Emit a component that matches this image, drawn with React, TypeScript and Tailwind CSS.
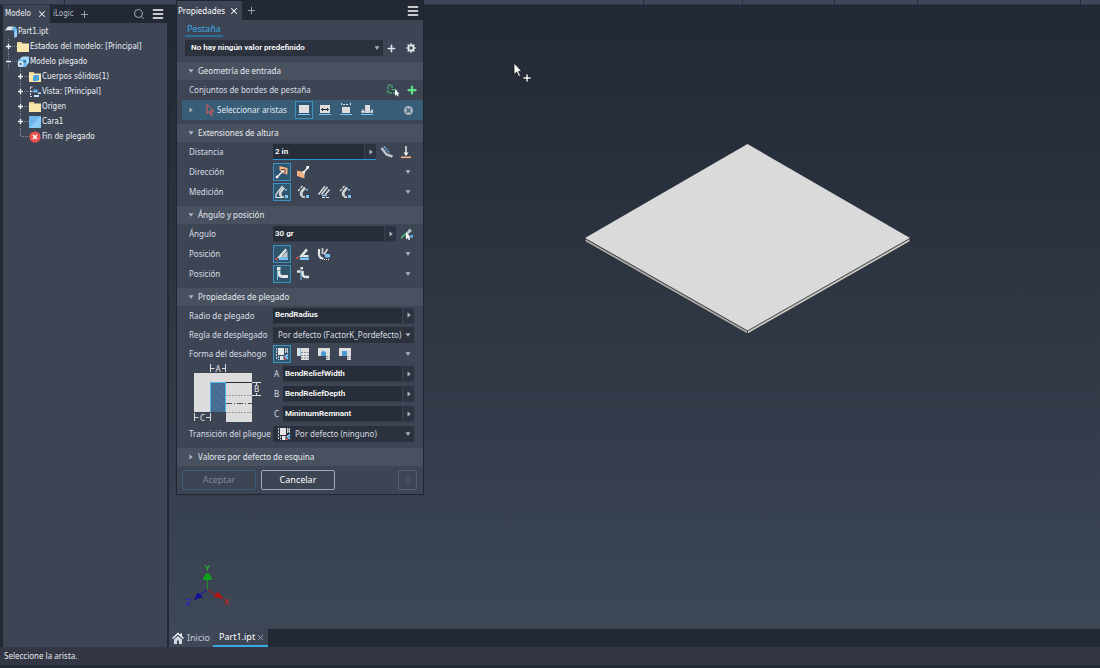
import type { ReactNode } from "react";
import clsx from "clsx";
import { Menu, Plus, Search, X } from "lucide-react";

type IconProps = { className?: string };

/* ---------- small glyphs ---------- */

function Caret({ dir = "down", className }: { dir?: "down" | "right"; className?: string }) {
  return (
    <svg viewBox="0 0 6 6" className={clsx("size-[6px] shrink-0", className)} fill="#aeb5c0" aria-hidden="true">
      {dir === "down" ? <path d="M0.5 1.2h5L3 4.8z" /> : <path d="M1.5 0.5v5L4.8 3z" />}
    </svg>
  );
}

function Gear() {
  return (
    <svg viewBox="0 0 10 10" className="size-[10px]" fill="none" stroke="#e6e8ec" aria-hidden="true">
      <circle cx="5" cy="5" r="2.6" strokeWidth="1.8" />
      <path d="M5 0.3v1.5M5 8.2v1.5M0.3 5h1.5M8.2 5h1.5M1.7 1.7l1 1M7.3 7.3l1 1M8.3 1.7l-1 1M2.7 7.3l-1 1" strokeWidth="1.7" />
    </svg>
  );
}

function Folder({ children }: { children?: ReactNode }) {
  return (
    <svg viewBox="0 0 12 12" className="size-3 shrink-0" aria-hidden="true">
      <path d="M0 1h4.5l1 1.4H12V11H0z" fill="#fbe7ae" />
      <path d="M0 1h4.5l1 1.4H0z" fill="#e8cd86" />
      {children}
    </svg>
  );
}

function PartIcon() {
  return (
    <svg viewBox="0 0 12 12" className="size-3 shrink-0" aria-hidden="true">
      <path d="M0 4.2 3 0.5h6L6.5 4.2z" fill="#e3e6ea" />
      <path d="M6.5 4.2 9 0.5c2 0.4 3 1.6 3 3.4v6.6l-2.6 1.2V6c0-1-1-1.6-2.9-1.8z" fill="#6bb8ee" />
      <path d="M9.4 6v5.7l2.6-1.2V4.6z" fill="#9ad3f8" />
    </svg>
  );
}

function FoldedModelIcon() {
  return (
    <svg viewBox="0 0 12 12" className="size-3 shrink-0" aria-hidden="true">
      <path d="M2.5 3 5.5 0.5H12v6.200L9 10z" fill="#a7d8f8" />
      <path d="M1 3.500h8.500V11H1z" fill="#6fbaee" />
      <circle cx="3.6" cy="8" r="2.9" fill="#dfe5ea" />
      <circle cx="3.6" cy="8" r="1.2" fill="#3f7fb0" />
      <circle cx="7.6" cy="5.4" r="1.2" fill="#23658f" />
    </svg>
  );
}

function ViewIcon() {
  return (
    <svg viewBox="0 0 12 12" className="size-3 shrink-0" aria-hidden="true">
      <path d="M1.5 1v9.5H4M1.5 5.5H5M1.5 1H4" stroke="#d7dce3" fill="none" strokeDasharray="2 1" />
      <path d="M4.5 3.5h4v3h-4z" fill="#63b4ec" />
      <path d="M9 6.5h3v1.5H9zM5 9h5v2H5z" fill="#c9e6fa" />
    </svg>
  );
}

function FaceIcon() {
  return (
    <svg viewBox="0 0 12 12" className="size-3 shrink-0" aria-hidden="true">
      <path d="M0 0h12v12H0z" fill="#6cb6ec" />
      <path d="M0 12 12 0v12z" fill="#8bcbf5" />
    </svg>
  );
}

function EndFoldIcon() {
  return (
    <svg viewBox="0 0 12 12" className="size-3 shrink-0" aria-hidden="true">
      <circle cx="6" cy="6" r="5.6" fill="#f0514f" />
      <path d="M4 4l4 4M8 4 4 8" stroke="#fff" strokeWidth="1.6" />
    </svg>
  );
}

/* ---------- tool icons, all on a 14px grid ---------- */

function Tool({ children, className }: IconProps & { children: ReactNode }) {
  return (
    <svg viewBox="0 0 14 14" className={clsx("size-[14px] shrink-0", className)} fill="none" aria-hidden="true">
      {children}
    </svg>
  );
}

const edgeIcons = [
  <Tool key="full">
    <path d="M2 2h10v8H2z" fill="#dedede" />
    <path d="M1 11.5h12" stroke="#7cc4f5" />
  </Tool>,
  <Tool key="width">
    <path d="M2 2h10v8H2z" fill="#dedede" />
    <path d="M3 6.500h8M4.500 5v3M9.500 5v3" stroke="#2d333d" />
    <path d="M1 11.5h12" stroke="#7cc4f5" />
  </Tool>,
  <Tool key="offset">
    <path d="M3 4h8v6H3z" fill="#dedede" />
    <path d="M2.500 0v3M11.500 0v3M4 1.500h6" stroke="#dedede" strokeDasharray="2 1" />
    <path d="M1 11.5h12" stroke="#7cc4f5" />
  </Tool>,
  <Tool key="fromTo">
    <path d="M5 2h5v8H5z" fill="#dedede" />
    <path d="M1 8h12v1.500H1zM2 6.500h2V10H2zM11 6.500h2V10h-2z" fill="#c9ccd1" />
    <path d="M1 11.5h12" stroke="#7cc4f5" />
  </Tool>,
];

const directionIcons = [
  <Tool key="a">
    <path d="M4.500 1 12.500 3v6.500L8.500 8.500 4.500 5z" fill="#f2b387" />
    <path d="M2 12 8.500 5.500" stroke="#fff" strokeWidth="1.3" />
    <path d="M0.8 10.800h2.600v2.400H0.8z" fill="#fff" />
    <path d="M6 4.500h4v4" stroke="#4a3a3a" strokeWidth="0.900" />
  </Tool>,
  <Tool key="b">
    <path d="M1 5.500l7.500 2v6L1 11z" fill="#f2b387" />
    <path d="M7 8 12 2.500" stroke="#fff" strokeWidth="1.3" />
    <path d="M10.400 1H13v2.600h-2.600zM6 6l3 0.300-.5 3z" fill="#fff" />
  </Tool>,
];

function Bend({ dashed, base }: { dashed?: boolean; base?: boolean }) {
  return (
    <>
      {base && <path d="M7.500 0.800 1 9.500V12.500h6" stroke="#e6e6e6" strokeWidth="1.200" />}
      {dashed && <path d="M6.500 0.800 1.800 6.500" stroke="#e6e6e6" strokeWidth="1.200" strokeDasharray="3 1" />}
      <path d="M9 2.500 5.500 7c-.8 1.500-.3 3 1 4" stroke="#d4d6d9" strokeWidth="2.600" />
      <path d="M6 12h3" stroke="#e6e6e6" strokeWidth="1.600" />
      <path d="M10 10h3v3h-3zM10 4h2v1.500h-2z" fill="#7cc4f5" />
    </>
  );
}

const measureIcons = [
  <Tool key="a"><Bend base /></Tool>,
  <Tool key="b"><Bend dashed /></Tool>,
  <Tool key="c">
    <path d="M8 1.200 1.500 9.500M10.500 2 4.500 9.500M12.500 4.500 8 10" stroke="#d4d6d9" strokeWidth="1.6" />
    <path d="M5 10.500h5" stroke="#7cc4f5" strokeWidth="1.4" />
    <path d="M5 12.500h8" stroke="#e6e6e6" strokeDasharray="3 1" />
  </Tool>,
  <Tool key="d"><Bend dashed /></Tool>,
];

const bendPositionIcons = [
  <Tool key="a">
    <path d="M2 11 10.500 1.500 12 3 5.500 11z" fill="#e6e6e6" />
    <path d="M6 10.500 12.500 4v6.500z" fill="#c9ccd1" />
    <path d="M4 10.500h9V13H4z" fill="#7cc4f5" />
    <path d="M0.500 11h2v2h-2z" fill="#e8504f" />
  </Tool>,
  <Tool key="b">
    <path d="M3 10 10 1.500l1.800 1.800L6.500 10z" fill="#e6e6e6" />
    <path d="M8 8h4.500v2H6.500z" fill="#e6e6e6" />
    <path d="M4 10.500h9V13H4z" fill="#7cc4f5" />
    <path d="M0.500 10h2v2h-2z" fill="#e8504f" />
  </Tool>,
  <Tool key="c">
    <path d="M2 2v4.500c0 3.500 2 5 4.500 5" stroke="#e6e6e6" strokeWidth="2.200" />
    <path d="M5.500 1v6M10.500 2 7 7.500" stroke="#c9ccd1" strokeWidth="1.800" />
    <path d="M8 7h5v3.500H8z" fill="#7cc4f5" />
    <path d="M7 12.500h6" stroke="#fff" strokeDasharray="1 1" />
  </Tool>,
];

const reliefPositionIcons = [
  <Tool key="a">
    <path d="M2 0h3.500v3H2z" fill="#e6e6e6" />
    <path d="M4 3.500v2.500c0 2.200 1.200 3.500 3.200 3.500H13" stroke="#e6e6e6" strokeWidth="2.800" />
    <path d="M2.500 3v10" stroke="#7cc4f5" />
  </Tool>,
  <Tool key="b">
    <path d="M4.500 0H7v2.500H4.500z" fill="#e6e6e6" />
    <path d="M1 4.500h3.500M6.500 4v2.500c0 2 1.200 3.500 3 3.500H13" stroke="#e6e6e6" strokeWidth="2.600" />
    <path d="M5 2.500V13" stroke="#7cc4f5" />
  </Tool>,
];

function TransitionIcon() {
  return (
    <Tool>
      <path d="M1.500 1v11M3.500 9v4" stroke="#c7ccd3" strokeDasharray="2 1" />
      <path d="M3 1h6v7H3z" fill="#e6e6e6" />
      <path d="M5 9h3.500v4H5z" fill="#e6e6e6" />
      <path d="M10 1h3v5h-3z" fill="#c7ccd3" />
      <path d="M11.500 1v5" stroke="#4a5261" strokeDasharray="1 1" />
      <path d="M9.500 8.500h1.500v1.500H9.500zM9 11.500h2V13H9z" fill="#e8504f" />
      <path d="M13 7.500 10 10.500M11.500 12l1.500-1.500" stroke="#7cc4f5" strokeWidth="1.800" />
    </Tool>
  );
}

const reliefIcons = [
  <TransitionIcon key="a" />,
  <Tool key="b">
    <path d="M1 1h3v8H1zM5 1h8v12H5z" fill="#dedede" />
    <path d="M5 5.500h8M5 8.500h8M5 11h8" stroke="#8a929e" strokeDasharray="2 1" />
    <path d="M4.500 1v8" stroke="#7cc4f5" />
  </Tool>,
  <Tool key="c">
    <path d="M1 1h12v12H9V7a3 3 0 0 0-5 0v2H1z" fill="#dedede" />
    <path d="M4 9V6.500a2.500 2.500 0 0 1 5 0V9z" fill="#4b9ad2" />
    <path d="M9 9.500h4M9 11.500h4" stroke="#8a929e" strokeDasharray="2 1" />
  </Tool>,
  <Tool key="d">
    <path d="M1 1h12v12H9V4H4v5H1z" fill="#dedede" />
    <path d="M4 4h5v5H4z" fill="#4b9ad2" />
    <path d="M9 9.500h4M9 11.500h4" stroke="#8a929e" strokeDasharray="2 1" />
  </Tool>,
];

/* ---------- form pieces ---------- */

function IconChoice({ label, icons, rowCaret = true }: { label: string; icons: ReactNode[]; rowCaret?: boolean }) {
  return (
    <div role="group" aria-label={label} className="flex flex-1 items-center gap-[3px]">
      {icons.map((icon, i) => (
        <button
          key={i}
          type="button"
          aria-label={`${label} ${i + 1}`}
          aria-pressed={i === 0}
          className={clsx(
            "grid size-[18px] place-items-center border",
            i === 0 ? "border-[#3f8fc0] bg-[#30566f]" : "border-transparent"
          )}
        >
          {icon}
        </button>
      ))}
      {rowCaret && <Caret className="mr-[3px] ml-auto" />}
    </div>
  );
}

function Row({ label, id, short, children }: { label: string; id?: string; short?: boolean; children: ReactNode }) {
  return (
    <div className={clsx("flex items-center pr-[9px] pl-3", short ? "h-[19px]" : "h-5")}>
      {id ? (
        <label htmlFor={id} className="w-[84px] shrink-0 whitespace-nowrap">{label}</label>
      ) : (
        <span className="w-[84px] shrink-0 whitespace-nowrap">{label}</span>
      )}
      {children}
    </div>
  );
}

function Field({ id, value, label, active }: { id: string; value: string; label?: string; active?: boolean }) {
  return (
    <div
      className={clsx(
        "flex h-4 min-w-0 flex-1 border-b bg-[#272d39]",
        active ? "border-[#1f9ad6]" : "border-[#333a47]"
      )}
    >
      <input
        id={id}
        aria-label={label}
        defaultValue={value}
        className="w-full min-w-0 flex-1 bg-transparent px-[2px] font-['Roboto',sans-serif] font-semibold text-white outline-none"
      />
      <button type="button" aria-label="Opciones" className="grid w-3 place-items-center border-l border-[#3b4251] bg-[#2d3441]">
        <Caret dir="right" />
      </button>
    </div>
  );
}

function Section({ title, open = true, children }: { title: string; open?: boolean; children?: ReactNode }) {
  return (
    <section>
      <h2>
        <button type="button" aria-expanded={open} className="flex h-[18px] w-full items-center gap-1 bg-[#495160] pl-[11px] text-[#e6e9ee]">
          <Caret dir={open ? "down" : "right"} />
          {title}
        </button>
      </h2>
      {children}
    </section>
  );
}

function ReliefFigure() {
  return (
    <svg viewBox="0 0 72 58" className="h-[58px] w-[72px] shrink-0" fill="none" aria-hidden="true">
      <path d="M0 9h58v49H32V48H0z" fill="#dcdcdc" />
      <path d="M16 18h16v30H16z" fill="#476c91" />
      <path d="M18 20l12 12M18 28l12 12M18 36l10 10M24 20l6 6" stroke="#5d83a8" strokeDasharray="1 1" />
      <path d="M16.5 48V18.5h15V48" stroke="#4fb4ee" />
      <path d="M32 31.500h26M32 48.500h26" stroke="#9a9fa8" strokeDasharray="2 1" />
      <path d="M32 39.500h26" stroke="#4a4f58" strokeDasharray="6 2 1 2" />
      <path d="M32 18.500h26" stroke="#2a2f39" />
      <path d="M58 18.500h9M58 31.500h9M62.500 18v3M62.500 29v3" stroke="#dcdcdc" />
      <path d="M16.500 0v8M31.500 0v8M16.500 4.500h4M28 4.500h4" stroke="#dcdcdc" />
      <path d="M0.500 49v8M16.500 49v8M0.500 53.500h4M12 53.500h4" stroke="#dcdcdc" />
      <g fill="#e6e6e6" className="font-['Noto_Sans',sans-serif] text-[8px]" textAnchor="middle">
        <text x="24" y="8">A</text>
        <text x="62.500" y="28">B</text>
        <text x="8.500" y="57">C</text>
      </g>
    </svg>
  );
}

/* ---------- model browser ---------- */

type Node = { label: string; icon: ReactNode; level: number; toggle?: "plus" | "minus" };

const nodes: Node[] = [
  { label: "Part1.ipt", icon: <PartIcon />, level: -1 },
  { label: "Estados del modelo: [Principal]", icon: <Folder />, level: 0, toggle: "plus" },
  { label: "Modelo plegado", icon: <FoldedModelIcon />, level: 0, toggle: "minus" },
  {
    label: "Cuerpos sólidos(1)",
    icon: <Folder><path d="M4 5.500 5.500 4H10v4.500L8.500 10H4z" fill="#4aa3e2" /></Folder>,
    level: 1,
    toggle: "plus",
  },
  { label: "Vista: [Principal]", icon: <ViewIcon />, level: 1, toggle: "plus" },
  { label: "Origen", icon: <Folder />, level: 1, toggle: "plus" },
  { label: "Cara1", icon: <FaceIcon />, level: 1, toggle: "plus" },
  { label: "Fin de plegado", icon: <EndFoldIcon />, level: 1 },
];

function Toggle({ kind }: { kind?: "plus" | "minus" }) {
  return (
    <svg viewBox="0 0 12 15" className="h-[15px] w-3 shrink-0" fill="none" aria-hidden="true">
      {!kind && <path d="M3.500 0v7.500H12" stroke="#8b93a0" strokeDasharray="1 1" />}
      {kind && <path d="M3.500 0v15M7 7.500h5" stroke="#7b8391" strokeDasharray="1 1" />}
      {kind && <path d="M1 7.500h5" stroke="#f2f4f7" strokeWidth="1.400" />}
      {kind === "plus" && <path d="M3.500 5v5" stroke="#f2f4f7" strokeWidth="1.400" />}
    </svg>
  );
}

function ModelBrowser() {
  return (
    <aside className="flex w-[169px] shrink-0 flex-col border-r-2 border-l-[3px] border-[#222935] bg-[#3d4555] font-['DejaVu_Sans_Condensed','DejaVu_Sans',sans-serif] text-[8px] text-[#f0f2f5]">
      <div className="flex h-[18px] items-center bg-[#222935] pr-[2px]">
        <button type="button" className="flex h-full w-[47px] items-center gap-1.5 bg-[#3d4555] pl-[2px]">
          Modelo <X className="size-[10px]" strokeWidth={2.5} />
        </button>
        <button type="button" className="px-[3px] text-[#b6bcc7]">iLogic</button>
        <button type="button" aria-label="Nueva pestaña" className="ml-[2px]">
          <Plus className="size-[11px] text-[#a5acb8]" />
        </button>
        <button type="button" aria-label="Buscar" className="ml-auto">
          <Search className="size-3 text-[#a5acb8]" />
        </button>
        <button type="button" aria-label="Menú" className="ml-1.5">
          <Menu className="size-[14px] text-white" strokeWidth={2.5} />
        </button>
      </div>
      <ul className="pt-px pl-[2px]">
        {nodes.map((node) => (
          <li
            key={node.label}
            className={clsx("flex h-[15px] items-center whitespace-nowrap", node.level === 1 && "pl-3")}
          >
            {node.level >= 0 && <Toggle kind={node.toggle} />}
            {node.icon}
            <span className="ml-px">{node.label}</span>
          </li>
        ))}
      </ul>
    </aside>
  );
}

/* ---------- properties panel ---------- */

function PropertiesPanel() {
  return (
    <form className="absolute top-0 left-[176px] w-[248px] border border-[#20262f] bg-[#3d4555] pb-1 font-['Noto_Sans',sans-serif] text-[8px] leading-3 text-[#d9dde4]">
      <div className="flex h-[19px] items-center bg-[#222935]">
        <button type="button" className="flex h-full w-[65px] items-center gap-1 bg-[#3d4555] pl-px text-white">
          Propiedades <X className="size-[10px]" strokeWidth={2.5} />
        </button>
        <button type="button" aria-label="Nueva pestaña" className="ml-1">
          <Plus className="size-[11px] text-[#a5acb8]" />
        </button>
        <button type="button" aria-label="Menú" className="mr-[3px] ml-auto">
          <Menu className="size-[14px] text-white" strokeWidth={2.5} />
        </button>
      </div>

      <div className="flex h-5 items-center pl-2">
        <a href="#pestana" className="border-b-2 border-[#2f6f93] px-[2px] text-[9px] text-[#3aa9e0]">Pestaña</a>
      </div>
      <div className="flex items-center pr-1 pl-2">
        <div className="relative flex-1">
          <select
            aria-label="Valor predefinido"
            className="h-4 w-full appearance-none bg-[#2b313d] pl-[6px] font-['Roboto',sans-serif] font-semibold text-white outline-none"
          >
            <option>No hay ningún valor predefinido</option>
          </select>
          <Caret className="absolute top-[5px] right-[3px]" />
        </div>
        <button type="button" aria-label="Añadir" className="grid w-4 place-items-center text-[#dfe2e7]">
          <Plus className="size-[11px]" strokeWidth={3.500} />
        </button>
        <button type="button" aria-label="Configuración" className="ml-1 grid w-4 place-items-center">
          <Gear />
        </button>
      </div>

      <div className="mt-1.5 flex flex-col gap-1">
        <Section title="Geometría de entrada">
          <div className="flex h-5 items-center gap-1.5 pr-[5px] pl-3">
            <span className="flex-1">Conjuntos de bordes de pestaña</span>
            <button type="button" aria-label="Seleccionar bucle">
              <Tool>
                <path d="M2 2h4v4.500h4V10H2z" stroke="#4fd07c" strokeDasharray="3 1" />
                <path d="M9 6v7l1.600-1.500 1.200 2 1-.6-1.100-1.900H13.500z" fill="#fff" />
              </Tool>
            </button>
            <button type="button" aria-label="Añadir conjunto">
              <Plus className="size-3 text-[#5fe08a]" strokeWidth={4.500} />
            </button>
          </div>
          <div className="ml-[5px] flex h-5 items-center bg-[#375d77] pl-1.5 text-[#e4eaf0]">
            <Caret dir="right" />
            <Tool className="ml-[9px]">
              <path d="M4 1.500v9l2.200-2 1.800 3.800 1.400-.7-1.700-3.500h3z" stroke="#e8605f" />
            </Tool>
            <span className="w-[78px] whitespace-nowrap">Seleccionar aristas</span>
            <IconChoice label="Extensión de aristas" icons={edgeIcons} rowCaret={false} />
            <button type="button" aria-label="Borrar" className="mr-[10px] grid size-[9px] place-items-center rounded-full bg-[#a9b4bf] text-[#375d77]">
              <X className="size-[7px]" strokeWidth={4} />
            </button>
          </div>
        </Section>

        <Section title="Extensiones de altura">
          <Row label="Distancia" id="distancia">
            <div className="flex w-[103px]">
              <Field id="distancia" value="2 in" active />
            </div>
            <button type="button" aria-label="Medir" className="ml-1">
              <Tool>
                <path d="M1.500 3 6.500 9.500 12.500 11.500" stroke="#bfc5cc" strokeWidth="2.400" />
                <path d="M4 1.500 9 7.500" stroke="#5fb5ec" strokeWidth="1.600" strokeDasharray="2 1" />
              </Tool>
            </button>
            <button type="button" aria-label="Hasta" className="ml-[5px]">
              <Tool>
                <path d="M7 1v9" stroke="#fff" strokeWidth="1.300" />
                <path d="M4.500 7.500h5L7 11z" fill="#fff" />
                <path d="M2 12.300h10" stroke="#f2b387" strokeWidth="1.600" />
              </Tool>
            </button>
          </Row>
          <Row label="Dirección"><IconChoice label="Dirección" icons={directionIcons} /></Row>
          <Row label="Medición"><IconChoice label="Medición" icons={measureIcons} /></Row>
        </Section>

        <Section title="Ángulo y posición">
          <Row label="Ángulo" id="angulo">
            <Field id="angulo" value="30 gr" />
            <button type="button" aria-label="Medir ángulo" className="ml-1">
              <Tool>
                <path d="M1 11 11 2" stroke="#4fd07c" strokeWidth="1.400" />
                <path d="M5 9.500 9 2l3 2z" fill="#bfc5cc" />
                <path d="M6 5v7.500l1.700-1.500 1.200 2.200 1.200-.6L9 10.500h2z" fill="#fff" />
                <path d="M10.500 8H13v2.500h-2.500z" fill="#5fb5ec" />
              </Tool>
            </button>
          </Row>
          <Row label="Posición"><IconChoice label="Posición de plegado" icons={bendPositionIcons} /></Row>
          <Row label="Posición"><IconChoice label="Posición de desahogo" icons={reliefPositionIcons} /></Row>
        </Section>

        <Section title="Propiedades de plegado">
          <Row short label="Radio de plegado" id="radio"><Field id="radio" value="BendRadius" /></Row>
          <Row short label="Regla de desplegado" id="regla">
            <div className="relative flex-1">
              <select id="regla" className="h-4 w-full appearance-none bg-[#2b313d] pl-[5px] outline-none">
                <option>Por defecto (FactorK_Pordefecto)</option>
              </select>
              <Caret className="absolute top-[5px] right-[3px]" />
            </div>
          </Row>
          <Row label="Forma del desahogo"><IconChoice label="Forma del desahogo" icons={reliefIcons} /></Row>
          <div className="flex pr-[9px] pl-[17px]">
            <ReliefFigure />
            <div className="ml-2 flex-1">
              {[
                ["A", "BendReliefWidth"],
                ["B", "BendReliefDepth"],
                ["C", "MinimumRemnant"],
              ].map(([key, value]) => (
                <div key={key} className="flex h-5 items-center">
                  <label htmlFor={key} className="w-[9px]">{key}</label>
                  <Field id={key} value={value} />
                </div>
              ))}
            </div>
          </div>
          <Row label="Transición del pliegue" id="transicion">
            <div className="relative flex flex-1 items-center bg-[#2b313d] pl-1">
              <TransitionIcon />
              <select id="transicion" className="h-4 w-full appearance-none bg-transparent pl-1 outline-none">
                <option>Por defecto (ninguno)</option>
              </select>
              <Caret className="absolute top-[5px] right-[3px]" />
            </div>
          </Row>
        </Section>

        <Section title="Valores por defecto de esquina" open={false} />

        <div className="flex gap-[5px] pr-[6px] pl-[5px]">
          <button type="button" disabled className="h-5 w-[74px] rounded-[2px] border border-[#35607c] text-[9px] text-[#7d8593]">Aceptar</button>
          <button type="button" className="h-5 w-[74px] rounded-[2px] border border-[#a0a7b3] text-[9px] text-white">Cancelar</button>
          <button type="button" disabled aria-label="Aplicar" className="ml-auto grid h-5 w-[19px] place-items-center rounded-[2px] border border-[#565e6d] text-[#565e6d]">
            <Plus className="size-[14px]" />
          </button>
        </div>
      </div>
    </form>
  );
}

/* ---------- graphics area ---------- */

function Plate() {
  return (
    <svg viewBox="0 0 328 192" className="absolute top-[138px] left-[415px] h-[192px] w-[328px]" aria-hidden="true">
      <path d="M1 95v3.500L163.500 191V187z" fill="#aaa9a6" />
      <path d="M326 95v3.500L163.500 191V187z" fill="#c9c8c0" />
      <path d="M163.500 1 326 95 163.500 187.500 1 95z" fill="#dadada" />
      <path d="M1 95.500 163.500 188 326 95.500M163.500 188v3M1 95v3.500L163.500 191 326 98.500V95" fill="none" stroke="#22262c" strokeWidth="0.800" />
    </svg>
  );
}

function AxisTriad() {
  return (
    <svg viewBox="0 0 46 44" className="absolute bottom-[22px] left-[16px] h-[44px] w-[46px]" fill="none" aria-hidden="true">
      <path d="M22.500 28V12" stroke="#0fae1b" strokeDasharray="2 1" />
      <path d="M18 17c0-3 3-7 4.500-7s4.500 4 4.500 7z" fill="#0fa01b" />
      <path d="M22.500 27 12 33" stroke="#1616b4" />
      <path d="M9 37l3.500-7.500 5.500 4.500z" fill="#0f0f9c" />
      <path d="M22.500 27 33 33" stroke="#b01414" />
      <path d="M29 34l4-5.500 5.500 7.500z" fill="#b80f0f" />
      <g className="font-['Liberation_Sans',sans-serif] text-[9px]" textAnchor="middle">
        <text x="22.500" y="8" fill="#1fc42b">Y</text>
        <text x="3.500" y="42" fill="#2222dc">Z</text>
        <text x="41.500" y="42" fill="#d81c1c">X</text>
      </g>
    </svg>
  );
}

function AddCursor() {
  return (
    <svg viewBox="0 0 20 22" className="absolute top-[57px] left-[343px] h-[22px] w-5" aria-hidden="true">
      <path d="M2 1v11.500l2.700-2.400 2 4.400 1.800-.9-2-4.200h3.300z" fill="#fff" stroke="#111" strokeWidth="0.800" />
      <path d="M14 12h2v3h3v2h-3v3h-2v-3h-3v-2h3z" fill="#fff" stroke="#111" strokeWidth="0.600" />
    </svg>
  );
}

function Home() {
  return (
    <svg viewBox="0 0 12 12" className="size-3" aria-hidden="true">
      <path d="M6 0.500 0 6l1 1 5-4.500L11 7l1-1-2-1.800V1.500H8.500v1.300z" fill="#f0f2f5" />
      <path d="M2 7.500 6 4l4 3.500V12H7V8.500H5V12H2z" fill="#d5d9df" />
    </svg>
  );
}

export default function App() {
  return (
    <div className="relative flex min-h-screen flex-col overflow-hidden bg-[#222935] font-['Noto_Sans',sans-serif] text-[8px] leading-3 text-[#e6e9ee]">
      <header className="grid h-[5px] grid-cols-[65px_268px_311px_99px_92px_83px_1fr_19px] divide-x divide-[#262c37] border-b border-[#2e3541] bg-[#404758]">
        {Array.from({ length: 8 }, (_, i) => <div key={i} />)}
      </header>

      <div className="flex flex-1">
        <ModelBrowser />
        <main className="flex min-w-0 flex-1 flex-col">
          <div className="relative flex-1 bg-linear-to-b from-[#222935] via-[#2f3644] to-[#3d4756]">
            <Plate />
            <AxisTriad />
            <AddCursor />
          </div>
          <nav className="flex h-[18px] bg-[#222935]">
            <a href="#inicio" className="flex w-11 items-center gap-[3px] bg-[#3f4858] pl-[3px] text-[9px] text-[#c9ced7]">
              <Home /> Inicio
            </a>
            <a href="#part1" className="flex w-[55px] items-center gap-px border-b-2 border-[#38a8e0] bg-[#3d4555] pl-1.5 text-[9px] text-white">
              Part1.ipt <X className="size-[9px] shrink-0 text-[#b6bcc7]" />
            </a>
          </nav>
        </main>
      </div>

      <footer className="flex h-[21px] items-center border-b-[3px] border-[#222935] bg-[#323645] pl-1">
        Seleccione la arista.
      </footer>

      <PropertiesPanel />
    </div>
  );
}
